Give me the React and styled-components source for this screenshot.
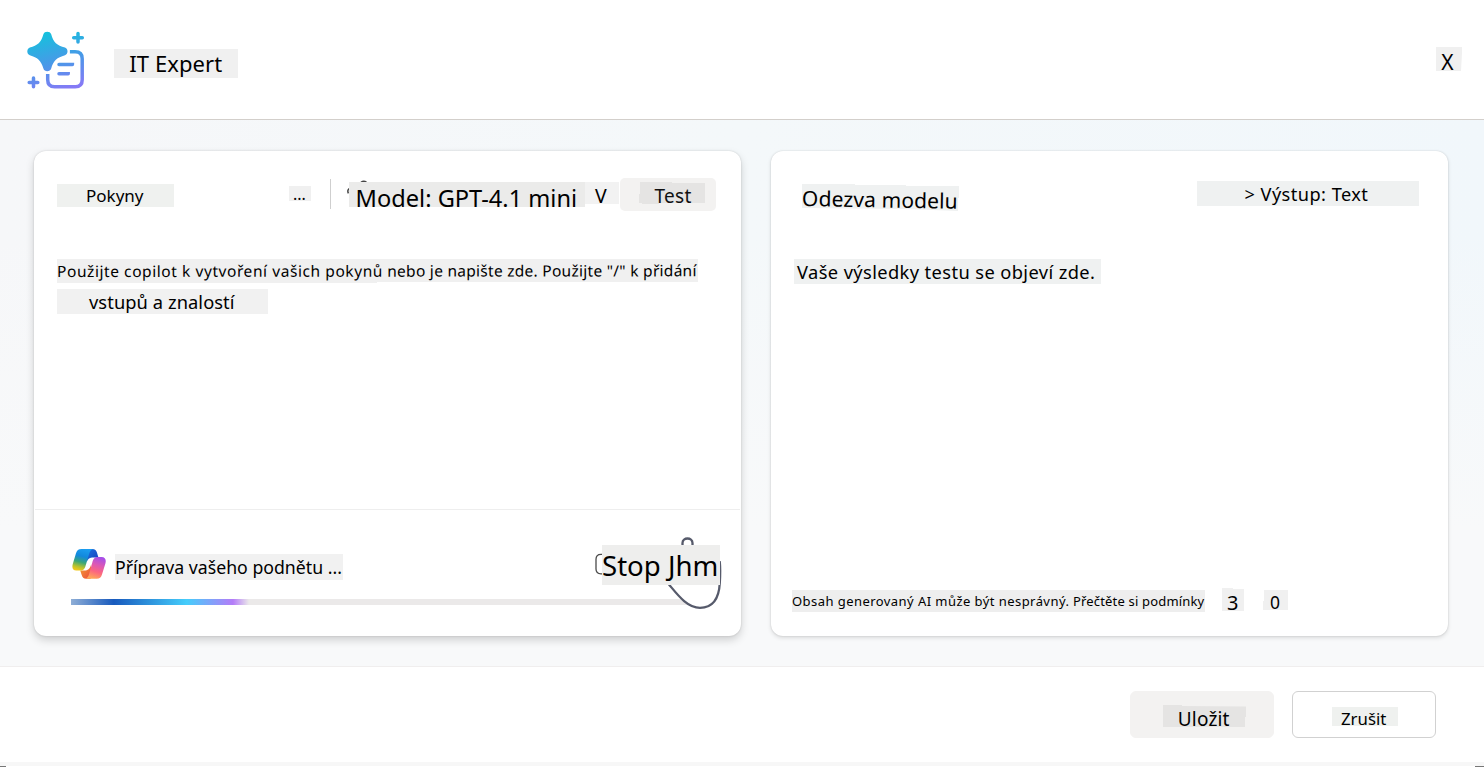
import React from "react";
import styled, { createGlobalStyle } from "styled-components";

const GlobalStyle = createGlobalStyle`
  * { box-sizing: border-box; }
  body { margin: 0; background: #fff; }
`;

const Page = styled.div`
  width: 1484px;
  height: 767px;
  overflow: hidden;
  display: flex;
  flex-direction: column;
  background: #fff;
  color: #000;
  font-family: "Noto Sans", sans-serif;
`;

const Header = styled.header`
  flex: none;
  height: 120px;
  display: flex;
  align-items: flex-start;
  padding: 0 22px 0 26px;
  border-bottom: 1px solid #d3cfcb;
`;

const HeaderLogo = styled.svg`
  flex: none;
  width: 60px;
  height: 62px;
  margin: 29px 28px 0 0;
`;

/* Text on a tinted patch; $base is the distance from the patch's top to the baseline. */
const Label = styled.span`
  display: block;
  flex: none;
  width: ${(p) => p.$w}px;
  height: ${(p) => p.$h}px;
  margin-top: ${(p) => p.$top || 0}px;
  margin-left: ${(p) => p.$left || 0}px;
  padding-left: ${(p) => p.$pad || 0}px;
  background: ${(p) => p.$bg || "#f0f0f0"};
  font-size: ${(p) => p.$size}px;
  line-height: ${(p) => 2 * (p.$base + 0.8 - 0.388 * p.$size)}px;
  letter-spacing: ${(p) => p.$ls || 0}px;
  white-space: pre;
  clip-path: ${(p) => p.$clip || "none"};
`;

const Slanted = styled.span`
  display: block;
  transform: rotate(${(p) => p.$deg}deg);
  transform-origin: 0 50%;
`;

const Spaced = styled.span`
  letter-spacing: ${(p) => p.$ls}px;
`;

const Spacer = styled.div`
  flex: 1;
`;

const Workspace = styled.main`
  flex: none;
  height: 546px;
  display: flex;
  gap: 30px;
  padding: 31px 36px 30px 34px;
  background: linear-gradient(to bottom, rgba(248, 249, 250, 0) 20%, #f8f9fa 75%),
    linear-gradient(to right, #f6f7f9, #f4f8fa 50%, #f1f7fb);
`;

const Card = styled.section`
  width: ${(p) => p.$w}px;
  height: 485px;
  display: flex;
  flex-direction: column;
  background: #fff;
  border-radius: 12px;
  box-shadow: ${(p) =>
    p.$raised
      ? "0 0 2px rgba(0,0,0,.16), 0 4px 9px rgba(0,0,0,.17)"
      : "0 0 2px rgba(0,0,0,.14), 0 2px 4px rgba(0,0,0,.12)"};
`;

const Toolbar = styled.div`
  flex: none;
  height: 108px;
  display: flex;
  align-items: flex-start;
  padding: 27px ${(p) => p.$right}px 0 ${(p) => p.$left}px;
`;

const Divider = styled.div`
  width: 1px;
  height: 30px;
  margin: 1px 15px 0 19px;
  background: #cfcfcf;
`;

const ModelPicker = styled.div`
  display: flex;
  align-items: flex-start;
  padding-top: 2px;
`;

const ModelIcon = styled.svg`
  flex: none;
  width: 26px;
  height: 16px;
  margin-right: -23px;
`;

const TestButton = styled.button`
  flex: none;
  width: 96px;
  height: 33px;
  display: flex;
  align-items: flex-start;
  margin: 0 0 0 1px;
  padding: 4px 0 0 19px;
  border: 0;
  border-radius: 5px;
  background: #f3f2f1;
  color: #111;
  font: inherit;
  text-align: left;
`;

const Prompt = styled.div`
  flex: 1;
  padding-left: 23px;
`;

const Composer = styled.div`
  flex: none;
  height: 127px;
  display: flex;
  flex-direction: column;
  margin: 0 1px;
  padding-left: 36px;
  border-top: 1px solid #eeeeee;
`;

const StatusRow = styled.div`
  height: 89px;
  display: flex;
  align-items: flex-start;
`;

const CopilotLogo = styled.svg`
  flex: none;
  width: 34px;
  height: 32px;
  margin: 38px 9px 0 1px;
`;

const StopControl = styled.div`
  position: relative;
  width: 127px;
  height: 75px;
  margin: 26px 18px 0 0;
  padding: 9px 0 0 7px;
`;

const HandCursor = styled.svg`
  position: absolute;
  left: 0;
  top: 0;
`;

const StopText = styled.div`
  position: relative;
`;

const Track = styled.div`
  width: 620px;
  height: 6px;
  background: #ebe9e9;
`;

const Progress = styled.div`
  width: 178px;
  height: 6px;
  background: linear-gradient(
    to right,
    #8faed6 0%,
    #185abd 24%,
    #45cdfb 65%,
    #b47cf8 91%,
    #ebe9e9 100%
  );
`;

const Notice = styled.div`
  flex: none;
  height: 48px;
  display: flex;
  align-items: flex-start;
  padding-left: 21px;
`;

const Footer = styled.footer`
  flex: none;
  height: 96px;
  display: flex;
  justify-content: flex-end;
  gap: 18px;
  padding: 24px 48px 0;
  border-top: 1px solid #f0eeee;
`;

const FooterButton = styled.button`
  width: 144px;
  height: 47px;
  display: flex;
  align-items: flex-start;
  margin: 0;
  padding: 0;
  border: 1px solid ${(p) => (p.$outlined ? "#d1d1d1" : "#f3f2f1")};
  border-radius: 6px;
  background: ${(p) => (p.$outlined ? "#fff" : "#f3f2f1")};
  color: #000;
  font: inherit;
  text-align: left;
`;

const BottomEdge = styled.div`
  flex: none;
  height: 5px;
  display: flex;
  justify-content: space-between;
  align-items: flex-end;
  background: linear-gradient(to bottom, #f7f7f7 4px, #fff 4px);
`;

const Corner = styled.div`
  width: ${(p) => p.$w}px;
  height: 1px;
  background: #777;
`;

function ExpertIcon() {
  return (
    <HeaderLogo viewBox="26 29 60 62" fill="none">
      <defs>
        <linearGradient id="expert" gradientUnits="userSpaceOnUse" x1="45" y1="31" x2="62" y2="90">
          <stop offset="0" stopColor="#12c3dc" />
          <stop offset="0.55" stopColor="#4a98e8" />
          <stop offset="1" stopColor="#857af6" />
        </linearGradient>
      </defs>
      <path
        fill="url(#expert)"
        d="M43.4 34.2C44.3 30.9 50.2 30.9 51.2 34.2C53.3 42.5 57 45.3 65 47.6C68.4 48.8 68.4 54.2 65 55.3C57 57.6 53.3 60.5 51.2 68.6C50.2 72.2 44.3 72.2 43.4 68.6C41.2 60.5 37.6 57.6 29.8 55.3C26.5 54.2 26.5 48.8 29.8 47.6C37.6 45.3 41.2 42.5 43.4 34.2Z"
      />
      <g stroke="url(#expert)" strokeWidth="3.5">
        <path d="M69.9 51.8H75.2Q82.2 51.8 82.2 58.8V79.8Q82.2 86.8 75.2 86.8H54.7Q47.7 86.8 47.7 79.8V74" />
        <path strokeLinecap="round" d="M59 64.5H72.4V64.6M59 73.7H68.2V73.8" />
        <path strokeLinecap="round" d="M73.7 37.8H82.3M78 33.5V42.1M29.2 82.4H37.8M33.5 78.1V86.7" />
      </g>
    </HeaderLogo>
  );
}

function CopilotIcon() {
  return (
    <CopilotLogo viewBox="0 0 34 32">
      <defs>
        <linearGradient id="cpBlue" x1="0.6" y1="0" x2="0.35" y2="1">
          <stop offset="0" stopColor="#1b9df0" />
          <stop offset="0.35" stopColor="#1288dc" />
          <stop offset="0.62" stopColor="#3ba778" />
          <stop offset="0.85" stopColor="#b9c32d" />
          <stop offset="1" stopColor="#f0c81c" />
        </linearGradient>
        <linearGradient id="cpPink" x1="0.65" y1="0" x2="0.35" y2="1">
          <stop offset="0" stopColor="#a64ee8" />
          <stop offset="0.35" stopColor="#dc58b4" />
          <stop offset="0.65" stopColor="#fb6581" />
          <stop offset="1" stopColor="#ffa957" />
        </linearGradient>
        <linearGradient id="cpNavy" x1="0" y1="0" x2="1" y2="1">
          <stop offset="0" stopColor="#1c72e0" />
          <stop offset="1" stopColor="#173fba" />
        </linearGradient>
        <linearGradient id="cpRed" x1="0" y1="0" x2="1" y2="1">
          <stop offset="0" stopColor="#f5a332" />
          <stop offset="1" stopColor="#ea4a3c" />
        </linearGradient>
      </defs>
      <path fill="url(#cpNavy)" d="M16 1H20.2C23.1 1 24.3 2.4 25.1 5L26.4 9.4H20C17 9.4 15.4 11.6 14.6 14.2Z" />
      <path fill="url(#cpRed)" d="M18.6 30.8H14.2C11.5 30.8 10.4 29.4 9.6 26.8L8.2 22.4H13.6C16.8 22.4 18.2 19.6 19.2 16.6Z" />
      <path fill="url(#cpBlue)" d="M9.6 1H21.4C19 1.4 18 3.2 17.2 5.8L13.2 18.9C12.4 21.2 10.8 22.6 7.9 22.6H4.3C0.8 22.6 -0.2 19.8 0.7 16.2L4 5.2C4.8 2.6 6.4 1 9.6 1Z" />
      <path fill="url(#cpPink)" d="M25.6 8.9H29.7C33.2 8.9 34.4 11.7 33.4 15.4L29.9 26.7C29.1 29.3 27.6 30.8 24.8 30.8H13.4C15.4 30.4 16.4 28.5 17.1 26.1L20.7 13C21.4 10.6 22.8 8.9 25.6 8.9Z" />
    </CopilotLogo>
  );
}

export default function App() {
  return (
    <Page>
      <GlobalStyle />
      <Header>
        <ExpertIcon />
        <Label $w={124} $h={29} $top={49} $pad={15.2} $size={22} $base={22.2} $ls={0.1}>
          IT Expert
        </Label>
        <Spacer />
        <Label
          $w={26}
          $h={24}
          $top={47}
          $pad={5.3}
          $size={21}
          $base={23}
          $clip="polygon(0 0, 100% 0, 100% 6px, 25px 100%, 0 100%)"
        >
          X
        </Label>
      </Header>

      <Workspace>
        <Card $w={707} $raised>
          <Toolbar $left={23} $right={25}>
            <Label $w={117} $h={23} $top={6} $pad={29} $size={17} $base={18} $bg="#eff1ef">
              Pokyny
            </Label>
            <Spacer />
            <Label $w={22} $h={15} $top={8} $pad={4} $size={16} $base={14}>
              ...
            </Label>
            <Divider />
            <ModelPicker>
              <ModelIcon viewBox="0 0 26 16" fill="none" stroke="#444" strokeWidth="1.5">
                <path d="M4.5 8.2C2 8.6 1.2 11 2.4 13.4M15 2.4C16.5 1.2 19 1.2 20.5 2.4" />
              </ModelIcon>
              <Label $w={236} $h={25} $top={2} $pad={6.6} $size={23.6} $base={24.4} $bg="#ebebea">
                Model: GPT-4.1 mini
              </Label>
              <Label $w={34} $h={22} $top={2} $pad={10} $size={19.5} $base={21} $bg="#f2f2f2">
                V
              </Label>
            </ModelPicker>
            <TestButton>
              <Label
                $w={66}
                $h={22}
                $pad={15.5}
                $size={19}
                $base={20.7}
                $ls={0.3}
                $bg="#e5e4e3"
                $clip="polygon(1px 0, 33px 0, 33px 1px, 100% 1px, 100% 21px, 20px 21px, 20px 100%, 3px 100%, 3px 21px, 0 21px, 0 12px, 1px 12px)"
              >
                Test
              </Label>
            </TestButton>
          </Toolbar>
          <Prompt>
            <Label
              $w={641}
              $h={24}
              $size={15.5}
              $base={17.7}
              $clip="polygon(0 0, 100% 0, 100% 23px, 320px 23px, 320px 100%, 0 100%)"
            >
              <Slanted $deg={-0.06}>
                <Spaced $ls={0.57}>Použijte copilot k vytvoření vašich pokynů</Spaced>
                <Spaced $ls={0.27}> nebo je napište zde. Použijte "/" k přidání</Spaced>
              </Slanted>
            </Label>
            <Label $w={211} $h={25} $top={6} $pad={32} $size={18.3} $base={18.9} $ls={0.08} $bg="#f1f1f1">
              vstupů a znalostí
            </Label>
          </Prompt>
          <Composer>
            <StatusRow>
              <CopilotIcon />
              <Label $w={228} $h={26} $top={44} $size={17.7} $base={19.7} $bg="#f1f1f1">
                Příprava vašeho podnětu ...
              </Label>
              <Spacer />
              <StopControl>
                <HandCursor width="127" height="75" viewBox="595 536 127 75" fill="none">
                  <path
                    fill="#fff"
                    stroke="#565a6b"
                    strokeWidth="2.3"
                    d="M669 584.5C677 594 687 607.8 700 607.8C714 607.8 719 598 719.8 583C720.3 575 720.4 568 719.8 562L692.5 552V543C692.5 537 682.5 537 682.5 543V560Z"
                  />
                  <path stroke="#4a4a4a" strokeWidth="1.3" d="M603 554.3H601Q596 554.3 596 559.3V569Q596 573.8 601 573.8H603" />
                </HandCursor>
                <StopText>
                  <Label $w={118} $h={40} $pad={-1} $size={27.6} $base={30.3} $bg="#eeeeed">
                    Stop Jhm
                  </Label>
                </StopText>
              </StopControl>
            </StatusRow>
            <Track>
              <Progress />
            </Track>
          </Composer>
        </Card>

        <Card $w={677}>
          <Toolbar $left={31} $right={29}>
            <Label
              $w={157}
              $h={27}
              $top={6}
              $size={21}
              $base={21.7}
              $ls={0.12}
              $bg="#eff1f1"
              $clip="polygon(0 0, 53px 0, 53px 1px, 104px 1px, 104px 2px, 100% 2px, 100% 14px, 156px 14px, 156px 100%, 104px 25px, 0 24px)"
            >
              <Slanted $deg={1}>Odezva modelu</Slanted>
            </Label>
            <Spacer />
            <Label $w={222} $h={25} $top={3} $pad={47.5} $size={18.2} $base={19.3} $ls={0.45} $bg="#eff1f1">
              {"> Výstup: Text"}
            </Label>
          </Toolbar>
          <Prompt>
            <Label $w={307} $h={25} $pad={3} $size={18.3} $base={19.7} $ls={0.39} $bg="#eff1f1">
              Vaše výsledky testu se objeví zde.
            </Label>
          </Prompt>
          <Notice>
            <Label $w={413} $h={22} $top={2} $size={13} $base={16} $bg="#eeeeee">
              <Spaced $ls={0.44}>Obsah generovaný AI může být nesprávný.</Spaced>
              <Spaced $ls={0.18}> Přečtěte si podmínky</Spaced>
            </Label>
            <Label $w={22} $h={23} $left={17} $pad={5} $size={20} $base={21.7} $clip="polygon(0 0, 11px 0, 11px 1px, 100% 1px, 100% 100%, 0 100%)">
              3
            </Label>
            <Label $w={25} $h={20} $left={19} $top={2} $pad={7} $size={17.5} $base={18.2} $clip="polygon(1px 0, 100% 0, 100% 100%, 0 100%, 0 11px, 1px 11px)">
              0
            </Label>
          </Notice>
        </Card>
      </Workspace>

      <Footer>
        <FooterButton>
          <Label
            $w={83}
            $h={22}
            $top={13}
            $left={32}
            $pad={14.7}
            $size={19}
            $base={21.3}
            $ls={0.2}
            $bg="#e5e4e3"
            $clip="polygon(0 0, 19px 0, 19px 1px, 100% 1.5px, 100% 12px, 82px 12px, 82px 100%, 0 100%)"
          >
            Uložit
          </Label>
        </FooterButton>
        <FooterButton $outlined>
          <Label $w={66} $h={19} $top={15} $left={39} $pad={9} $size={16.8} $base={18} $bg="#eff1ef">
            Zrušit
          </Label>
        </FooterButton>
      </Footer>
      <BottomEdge>
        <Corner $w={6} />
        <Corner $w={9} />
      </BottomEdge>
    </Page>
  );
}
